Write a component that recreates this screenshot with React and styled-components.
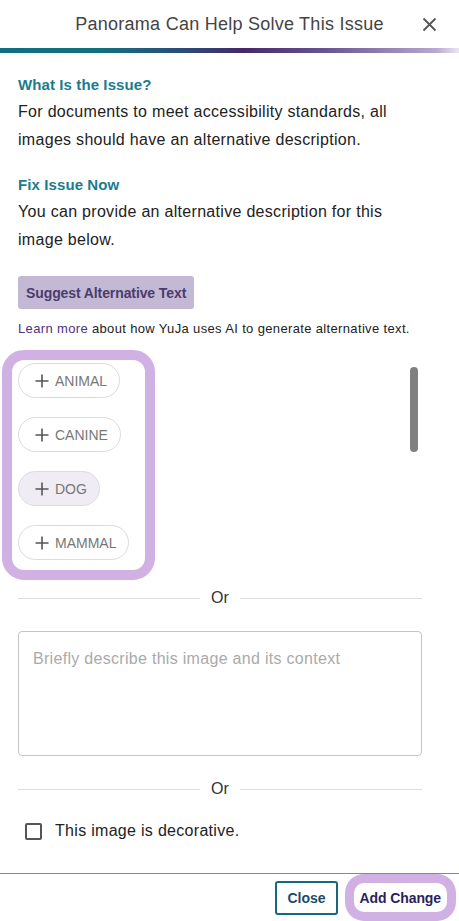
import React from "react";
import styled, { createGlobalStyle } from "styled-components";

const GlobalStyle = createGlobalStyle`
  html, body {
    margin: 0;
    padding: 0;
    background: #ffffff;
  }
  body {
    font-family: "Liberation Sans", Arial, sans-serif;
    color: #222222;
  }
  * {
    box-sizing: border-box;
  }
`;

const tags = [
  { label: "ANIMAL" },
  { label: "CANINE" },
  { label: "DOG", active: true },
  { label: "MAMMAL" },
];

function PlusIcon() {
  return (
    <svg width="14" height="14" viewBox="0 0 14 14" aria-hidden="true">
      <path d="M7 0.5v13M0.5 7h13" stroke="#555" strokeWidth="1.6" fill="none" />
    </svg>
  );
}

function CloseIcon() {
  return (
    <svg width="15" height="15" viewBox="0 0 15 15" aria-hidden="true">
      <path d="M1.5 1.5l12 12M13.5 1.5l-12 12" stroke="#555" strokeWidth="1.8" fill="none" />
    </svg>
  );
}

function App() {
  return (
    <>
      <GlobalStyle />
      <Panel>
        <Header>
          <span />
          <Title>Panorama Can Help Solve This Issue</Title>
          <IconButton aria-label="Close">
            <CloseIcon />
          </IconButton>
        </Header>
        <GradientBar />
        <Body>
          <Heading>What Is the Issue?</Heading>
          <Text>
            For documents to meet accessibility standards, all images should
            have an alternative description.
          </Text>
          <Heading $top={21}>Fix Issue Now</Heading>
          <Text>
            You can provide an alternative description for this image below.
          </Text>
          <SuggestButton>Suggest Alternative Text</SuggestButton>
          <Note>
            <NoteLink href="#">Learn more</NoteLink> about how YuJa uses AI to
            generate alternative text.
          </Note>
          <TagArea>
            <TagGroup>
              {tags.map((t) => (
                <Tag key={t.label} $active={t.active}>
                  <PlusIcon />
                  {t.label}
                </Tag>
              ))}
            </TagGroup>
            <ScrollThumb />
          </TagArea>
          <Divider $top={8}>Or</Divider>
          <DescribeBox placeholder="Briefly describe this image and its context" />
          <Divider $top={23}>Or</Divider>
          <CheckRow>
            <CheckBox type="checkbox" />
            This image is decorative.
          </CheckRow>
        </Body>
        <Footer>
          <OutlineButton>Close</OutlineButton>
          <PrimaryButton>Add Change</PrimaryButton>
        </Footer>
      </Panel>
    </>
  );
}

const Panel = styled.div`
  width: 459px;
  height: 921px;
  display: flex;
  flex-direction: column;
  background: #ffffff;
  overflow: hidden;
`;

const Header = styled.header`
  height: 48px;
  display: grid;
  grid-template-columns: 1fr auto 1fr;
  align-items: center;
  padding: 0 21px;
`;

const Title = styled.h2`
  margin: 0;
  font-size: 18px;
  font-weight: 400;
  color: #444444;
  letter-spacing: 0.25px;
`;

const IconButton = styled.button`
  justify-self: end;
  display: flex;
  align-items: center;
  justify-content: center;
  width: 18px;
  height: 18px;
  padding: 0;
  border: none;
  background: none;
`;

const GradientBar = styled.div`
  height: 5px;
  flex-shrink: 0;
  background: linear-gradient(
    90deg,
    #0f6f80 0%,
    #137080 22%,
    #2b4b78 40%,
    #45286b 53%,
    #6b5794 72%,
    #b7a9d0 95%,
    #ebe6f2 100%
  );
`;

const Body = styled.main`
  flex: 1;
  padding: 22px 37px 0 18px;
  display: flex;
  flex-direction: column;
  min-height: 0;
`;

const Heading = styled.h3`
  margin: ${(p) => p.$top || 0}px 0 3px;
  font-size: 15px;
  line-height: 20px;
  font-weight: 700;
  color: #1a7c8c;
  letter-spacing: 0.1px;
`;

const Text = styled.p`
  margin: 0;
  font-size: 16px;
  line-height: 28px;
  letter-spacing: 0.3px;
  color: #222222;
`;

const SuggestButton = styled.button`
  align-self: flex-start;
  margin-top: 22px;
  height: 33px;
  padding: 0 8px;
  border: none;
  border-radius: 3px;
  background: #c4b9d4;
  color: #4a3c6e;
  font-family: inherit;
  font-size: 14px;
  font-weight: 700;
  letter-spacing: -0.1px;
`;

const Note = styled.p`
  margin: 12px 0 0;
  font-size: 13px;
  line-height: 16px;
  letter-spacing: 0.35px;
  color: #222222;
`;

const NoteLink = styled.a`
  color: #4b3282;
  text-decoration: none;
`;

const TagArea = styled.div`
  margin-top: 13px;
  display: flex;
  justify-content: space-between;
  align-items: flex-start;
`;

const TagGroup = styled.div`
  margin-left: -16px;
  width: 153px;
  padding: 3px 15px 10px 6px;
  border: 10px solid #d1b0e3;
  border-radius: 22px;
  display: flex;
  flex-direction: column;
  align-items: flex-start;
  gap: 19px;
`;

const Tag = styled.span`
  display: inline-flex;
  align-items: center;
  gap: 6px;
  height: 35px;
  padding: 0 12px 0 16px;
  border: 1px solid #dcdcdc;
  border-radius: 18px;
  background: ${(p) => (p.$active ? "#efecf4" : "#ffffff")};
  color: #777777;
  font-size: 14px;
`;

const ScrollThumb = styled.div`
  margin: 17px 4px 0 0;
  width: 8px;
  height: 85px;
  border-radius: 4px;
  background: #808080;
`;

const Divider = styled.div`
  margin-top: ${(p) => p.$top}px;
  display: flex;
  align-items: center;
  gap: 11px;
  font-size: 16px;
  line-height: 20px;
  color: #333333;

  &::before,
  &::after {
    content: "";
    flex: 1;
    height: 1px;
    background: #dddddd;
  }
`;

const DescribeBox = styled.textarea`
  margin-top: 23px;
  height: 125px;
  width: 100%;
  padding: 16px 14px;
  border: 1px solid #c4c4c4;
  border-radius: 4px;
  resize: none;
  font-family: inherit;
  font-size: 16px;
  letter-spacing: 0.3px;
  line-height: 22px;

  &::placeholder {
    color: #aaaaaa;
  }
`;

const CheckRow = styled.label`
  margin-top: 23px;
  padding-left: 7px;
  display: flex;
  align-items: center;
  gap: 13px;
  font-size: 16px;
  letter-spacing: 0.3px;
  color: #222222;
`;

const CheckBox = styled.input`
  appearance: none;
  margin: 0;
  width: 17px;
  height: 17px;
  border: 2px solid #555555;
  border-radius: 2px;
  background: #ffffff;
`;

const Footer = styled.footer`
  height: 48px;
  flex-shrink: 0;
  border-top: 1px solid #888888;
  display: flex;
  justify-content: flex-end;
  align-items: center;
  gap: 16px;
  padding: 0 12px 0 0;
`;

const OutlineButton = styled.button`
  height: 34px;
  padding: 0 10px;
  border: 2px solid #17687a;
  border-radius: 3px;
  background: #ffffff;
  color: #1c4a6b;
  font-family: inherit;
  font-size: 14px;
  font-weight: 700;
`;

const PrimaryButton = styled.button`
  height: 29px;
  padding: 0 6px;
  border: none;
  border-radius: 10px;
  background: #ffffff;
  box-shadow: 0 0 0 9px #d1b0e3;
  color: #2b1f5c;
  font-family: inherit;
  font-size: 14px;
  font-weight: 700;
  letter-spacing: -0.1px;
`;

export default App;
